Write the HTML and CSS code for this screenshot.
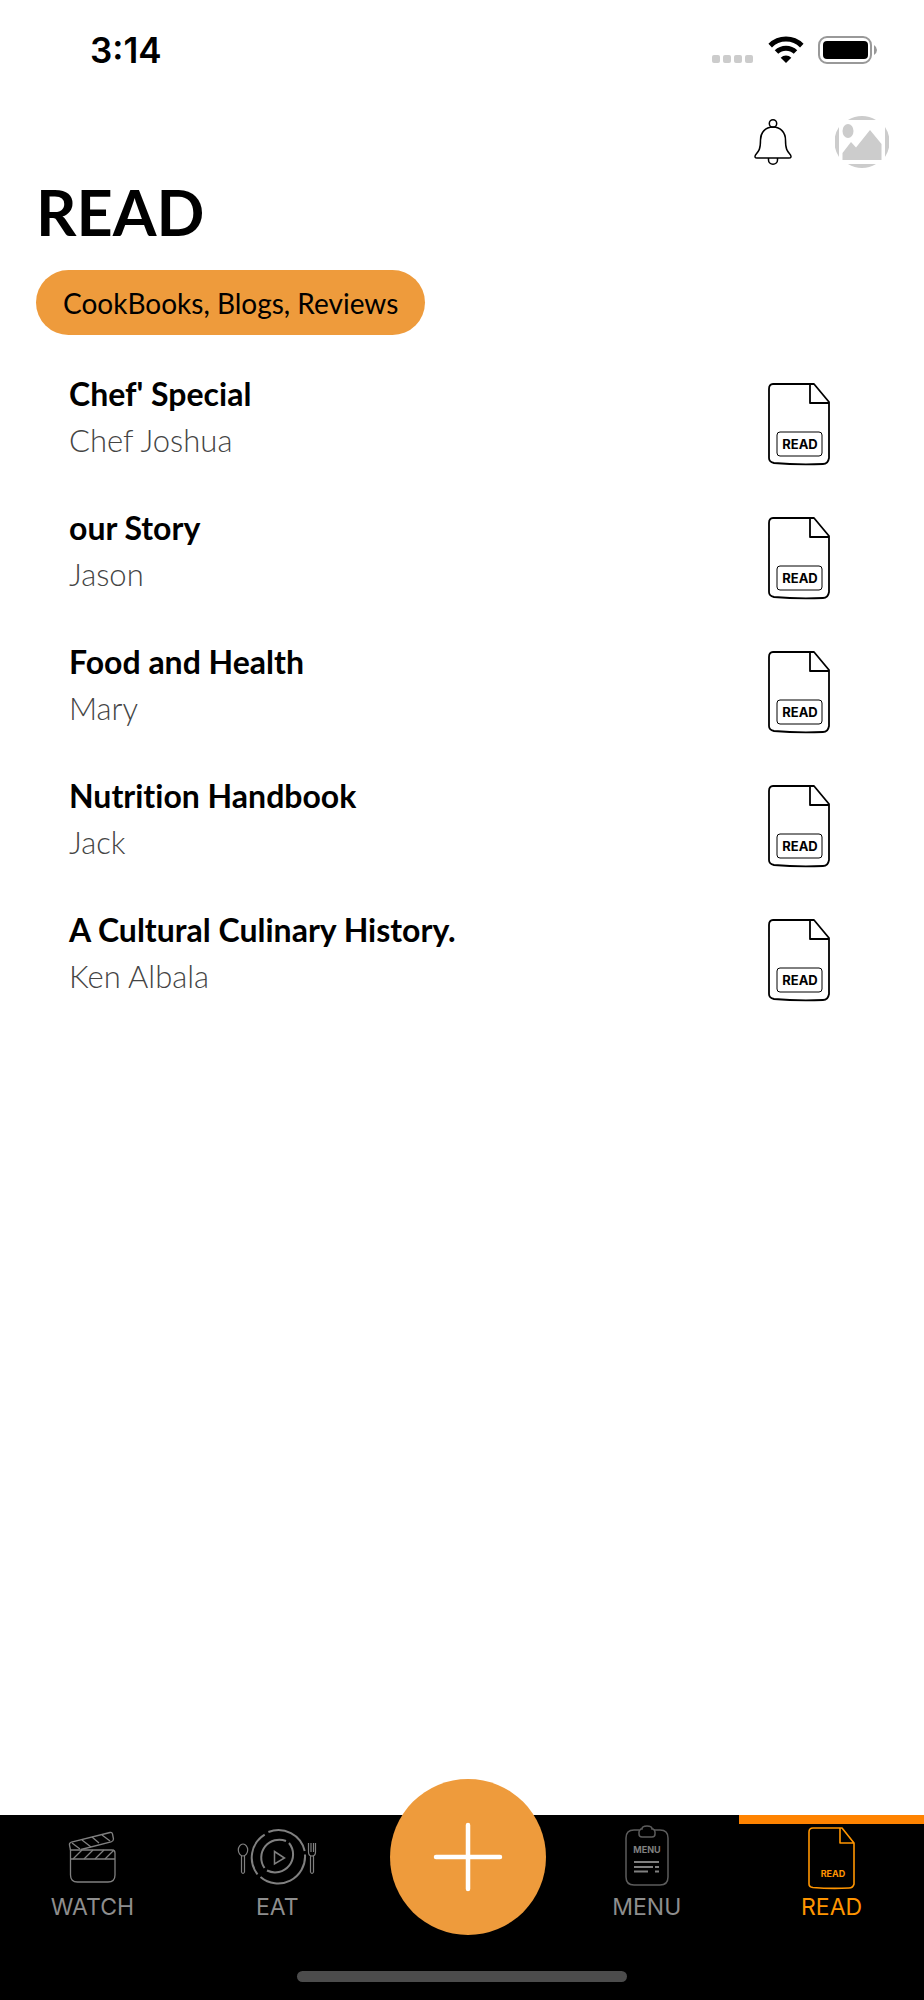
FILE: index.html
```html
<!DOCTYPE html>
<html lang="en">
<head>
<meta charset="utf-8">
<meta name="viewport" content="width=device-width, initial-scale=1">
<title>Read</title>
<link rel="stylesheet" href="styles.css">
</head>
<body>
<div class="screen">
  <div class="status">
    <time class="clock">3:14</time>
    <div class="status-icons">
      <svg width="42" height="8" viewBox="0 0 42 8" class="signal" aria-hidden="true"><g fill="#ccc"><rect width="8" height="8" rx="2"/><rect x="11" width="8" height="8" rx="2"/><rect x="22" width="8" height="8" rx="2"/><rect x="33" width="8" height="8" rx="2"/></g></svg>
      <svg width="36" height="28" viewBox="0 0 36 28" aria-hidden="true"><g fill="none" stroke="#000" stroke-width="5"><path d="M2.200 9.600A22.500 22.500 0 0 1 33.800 9.600"/><path d="M8.500 16A13.600 13.600 0 0 1 27.500 16"/></g><path d="M18 27L12.700 21.700A7.600 7.600 0 0 1 23.300 21.700Z"/></svg>
      <svg width="60" height="28" viewBox="0 0 60 28" aria-hidden="true"><rect x="1" y="1" width="52" height="26" rx="8" fill="none" stroke="#999" stroke-width="2"/><rect x="5" y="5" width="45" height="18" rx="4"/><path d="M56 9Q59 11 59 14T56 19Z" fill="#999"/></svg>
    </div>
  </div>
  <header class="actions">
    <button class="icon-button" aria-label="Notifications">
      <svg width="38" height="46" viewBox="0 0 38 46" fill="none" stroke="#000" stroke-width="1.500"><circle cx="19" cy="4.500" r="3.700"/><path d="M19 8C11 8 6.500 14 6.500 21C6.500 30 5 32 1.500 36Q0 39 3 39H35Q38 39 36.500 36C33 32 31.500 30 31.500 21C31.500 14 27 8 19 8Z"/><path d="M14.500 39V41A4.500 4.200 0 0 0 23.500 41V39"/></svg>
    </button>
    <button class="icon-button" aria-label="Profile">
      <svg width="54" height="54" viewBox="0 0 54 54" fill="#ccc"><path d="M13 5A27 27 0 0 1 41 5ZM13 49A27 27 0 0 0 41 49ZM4 12A27 27 0 0 0 4 42ZM50 12A27 27 0 0 1 50 42Z"/><ellipse cx="13" cy="16" rx="5.500" ry="7"/><path d="M7.500 45V38L16 27L21 32.500L35 15L46.500 29V45Z"/></svg>
    </button>
  </header>
  <main class="content">
    <h1 class="title">READ</h1>
    <button class="chip">CookBooks, Blogs, Reviews</button>
    <ul class="list">
      <li class="item">
        <div class="book"><h2 class="name">Chef' Special</h2><p class="author">Chef Joshua</p></div>
        <svg class="doc" viewBox="0 0 64 84"><path d="M6 2H47L62 20V76Q61 82 56 82Q30 83 7 81Q2 80 2 76V7Q2 2 6 2ZM43 2V21H62"/><rect class="doc-plate" x="10" y="50" width="45" height="24" rx="3"/><text class="doc-word" x="33" y="67" text-anchor="middle">READ</text></svg>
      </li>
      <li class="item">
        <div class="book"><h2 class="name">our Story</h2><p class="author">Jason</p></div>
        <svg class="doc" viewBox="0 0 64 84"><path d="M6 2H47L62 20V76Q61 82 56 82Q30 83 7 81Q2 80 2 76V7Q2 2 6 2ZM43 2V21H62"/><rect class="doc-plate" x="10" y="50" width="45" height="24" rx="3"/><text class="doc-word" x="33" y="67" text-anchor="middle">READ</text></svg>
      </li>
      <li class="item">
        <div class="book"><h2 class="name">Food and Health</h2><p class="author">Mary</p></div>
        <svg class="doc" viewBox="0 0 64 84"><path d="M6 2H47L62 20V76Q61 82 56 82Q30 83 7 81Q2 80 2 76V7Q2 2 6 2ZM43 2V21H62"/><rect class="doc-plate" x="10" y="50" width="45" height="24" rx="3"/><text class="doc-word" x="33" y="67" text-anchor="middle">READ</text></svg>
      </li>
      <li class="item">
        <div class="book"><h2 class="name">Nutrition Handbook</h2><p class="author">Jack</p></div>
        <svg class="doc" viewBox="0 0 64 84"><path d="M6 2H47L62 20V76Q61 82 56 82Q30 83 7 81Q2 80 2 76V7Q2 2 6 2ZM43 2V21H62"/><rect class="doc-plate" x="10" y="50" width="45" height="24" rx="3"/><text class="doc-word" x="33" y="67" text-anchor="middle">READ</text></svg>
      </li>
      <li class="item">
        <div class="book"><h2 class="name">A Cultural Culinary History.</h2><p class="author">Ken Albala</p></div>
        <svg class="doc" viewBox="0 0 64 84"><path d="M6 2H47L62 20V76Q61 82 56 82Q30 83 7 81Q2 80 2 76V7Q2 2 6 2ZM43 2V21H62"/><rect class="doc-plate" x="10" y="50" width="45" height="24" rx="3"/><text class="doc-word" x="33" y="67" text-anchor="middle">READ</text></svg>
      </li>
    </ul>
  </main>
  <footer class="bottom">
    <nav class="tabs">
      <a class="tab" href="#watch">
        <svg width="48" height="66" viewBox="0 0 48 66" fill="none" stroke="#808080" stroke-width="1.300"><path d="M2.500 26H44Q47 26 47 29V51Q47 58 40 58H9.500Q2.500 58 2.500 51ZM2.500 35H47"/><path d="M2.500 26L1.500 21Q1 19 3.500 18L42 8.500Q44 8 44.500 10L45.500 15Q45.500 17 43 18L13 25.500"/><path d="M5 35L14 26M16 35L25 26M27 35L36 26M37 35L46 26M4 19L12 25M14 16L23 23M24 13L31 19M34 11L42 17"/></svg>
        <span>WATCH</span>
      </a>
      <a class="tab" href="#eat">
        <svg width="80" height="66" viewBox="0 -1 80 66" fill="none" stroke="#808080"><g stroke-width="2"><path d="M31.400 7A27 27 0 0 1 67.700 26M68 29.500A27 27 0 0 1 23.500 52M20.500 49.300A27 27 0 0 1 27.700 9.600"/><path d="M49 16A18 18 0 0 0 27.500 43M30 45.500A18 18 0 0 0 52 18"/></g><path d="M37.500 26.500V39L47.500 33Z" stroke-width="1.500"/><g stroke-width="1.200"><ellipse cx="6" cy="25" rx="4.700" ry="6"/><path d="M4.500 31V47Q6 50 7.500 47V31"/><path d="M71.500 18V27Q71.500 31 75 31Q78.500 31 78.500 27V18M74 18V27M76.500 18V27M73.500 31V47Q75 50 76.500 47V31"/></g></svg>
        <span>EAT</span>
      </a>
      <div class="add-slot">
        <button class="add" aria-label="Add"><svg width="70" height="70" viewBox="0 0 70 70" stroke="#fff" stroke-width="4.500" stroke-linecap="round"><path d="M35 3V67M3 35H67"/></svg></button>
      </div>
      <a class="tab" href="#menu">
        <svg width="46" height="66" viewBox="0 0 46 66" fill="none" stroke="#5c5c5c" stroke-width="1.500"><path d="M15 6H10Q2 6 2 14V53Q2 61 10 61H36Q44 61 44 53V14Q44 6 36 6H30"/><path d="M18 5Q18 2 23 2T28 5H29Q31 6 31 8V10Q31 13 28 13H18Q15 13 15 10V8Q15 6 17 5Z"/><path stroke="#808080" stroke-width="2" d="M10 38H35M10 43H29M10 47.500H24M31 43H35M31 47.500H35"/><text class="menu-word" x="23" y="29" text-anchor="middle">MENU</text></svg>
        <span>MENU</span>
      </a>
      <a class="tab tab-active" href="#read" aria-current="page">
        <svg width="50" height="66" viewBox="0 0 50 66" fill="none" stroke="#ff9500" stroke-width="1.600"><path d="M6 4H35L47 19V60Q46 64 42 64Q24 65 6 63.500Q2 63 2 60V8Q2 4 6 4ZM33 4V19H47" stroke-linejoin="round"/><text class="read-word" x="26" y="53" text-anchor="middle">READ</text></svg>
        <span>READ</span>
      </a>
    </nav>
    <div class="home-bar"></div>
  </footer>
</div>
</body>
</html>
```
FILE: styles.css
```css
* { box-sizing: border-box; margin: 0; padding: 0; }
body { background: #fff; color: #000; font-family: Lato, "Open Sans", sans-serif; font-variant-ligatures: none; }
button { border: 0; background: none; color: inherit; font: inherit; cursor: pointer; }
svg { display: block; flex: none; }
.screen { display: flex; flex-direction: column; min-height: 100vh; }

.status { display: flex; justify-content: space-between; align-items: center; height: 100px; padding: 0 46px 0 90px; }
.clock { font: 600 35px/40px Inter, sans-serif; }
.status-icons { display: flex; align-items: center; gap: 14px; }
.signal { margin-top: 18px; }

.actions { display: flex; justify-content: flex-end; align-items: center; gap: 43px; height: 84px; padding: 0 35px; }

.content { flex: 1; padding: 0 36px; }
.title { font-size: 63px; font-weight: 700; line-height: 56px; }
.chip { display: block; height: 65px; margin-top: 30px; padding: 0 27px; border-radius: 33px; background: #ee9b3c; font-size: 28px; }
.list { margin-top: 36px; list-style: none; }
.item { display: flex; justify-content: space-between; align-items: center; height: 106px; margin-bottom: 28px; padding: 0 57px 0 33px; }
.book { padding-bottom: 14px; }
.name { font-size: 32px; font-weight: 700; line-height: 46px; }
.author { color: #444; font-size: 31px; font-weight: 300; line-height: 46px; }
.doc { width: 64px; height: 84px; fill: none; stroke: #000; stroke-width: 1.8; stroke-linejoin: round; }
.doc-plate { stroke-width: 1; }
.doc-word { fill: #000; stroke: none; font: 700 13px Inter, sans-serif; }

.bottom { display: flex; flex-direction: column; justify-content: space-between; height: 185px; padding-bottom: 18px; background: #000; }
.tabs { display: grid; grid-template-columns: repeat(5, 1fr); }
.tab { display: flex; flex-direction: column; align-items: center; gap: 3px; padding-top: 9px; color: #8e8e8e; font: 400 23px/28px Inter, sans-serif; text-decoration: none; }
.tab-active { box-shadow: inset 0 9px #ff8300; color: #ff9500; }
.menu-word { fill: #808080; stroke: none; font: 700 9px Inter, sans-serif; }
.read-word { fill: #ff9500; stroke: none; font: 700 9px Inter, sans-serif; }
.add-slot { display: flex; justify-content: center; height: 106px; padding-left: 13px; }
.add { display: grid; place-items: center; flex: none; width: 156px; height: 156px; margin-top: -36px; border-radius: 50%; background: #ee9b3c; }
.home-bar { align-self: center; width: 330px; height: 11px; border-radius: 6px; background: #4c4c4c; }
```
